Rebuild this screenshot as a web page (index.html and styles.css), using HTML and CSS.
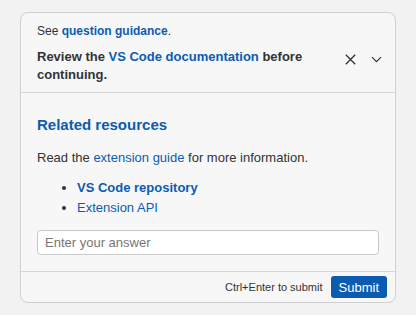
FILE: index.html
```html
<!DOCTYPE html>
<html lang="en">
<head>
    <meta charset="UTF-8">
    <meta name="viewport" content="width=device-width, initial-scale=1.0">
    <title>Question</title>
    <link rel="stylesheet" href="styles.css">
</head>
<body>
    <div class="card">
        <div class="card-header">
            <p class="hint">See <a href="#" class="strong-link">question guidance</a>.</p>
            <div class="notice">
                <p>Review the <a href="#">VS Code documentation</a> before continuing.</p>
                <div class="actions">
                    <button class="icon-btn" aria-label="Dismiss">
                        <svg width="11" height="11" viewBox="0 0 11 11"><path d="M0.8 0.8l9.4 9.4M10.2 0.8l-9.4 9.4" stroke="#333" stroke-width="1.3" fill="none"/></svg>
                    </button>
                    <button class="icon-btn" aria-label="Collapse">
                        <svg width="11" height="7" viewBox="0 0 11 7"><path d="M1 1.2l4.5 4.5 4.5-4.5" stroke="#333" stroke-width="1.2" fill="none"/></svg>
                    </button>
                </div>
            </div>
        </div>

        <div class="card-body">
            <h2>Related resources</h2>
            <p>Read the <a href="#">extension guide</a> for more information.</p>
            <ul>
                <li><a href="#" class="strong-link">VS Code repository</a></li>
                <li><a href="#">Extension API</a></li>
            </ul>
            <input type="text" placeholder="Enter your answer">
        </div>

        <div class="card-footer">
            <span class="shortcut">Ctrl+Enter to submit</span>
            <button class="submit">Submit</button>
        </div>
    </div>
</body>
</html>
```

FILE: styles.css
```css
body {
    font-family: "Liberation Sans", Arial, sans-serif;
    margin: 0;
    padding: 12px 20px;
    background-color: #f2f2f2;
    color: #333;
    font-size: 13px;
}

a {
    color: #0b5cb0;
    text-decoration: none;
}

.strong-link {
    font-weight: bold;
}

.card {
    width: 374px;
    background-color: #f7f7f7;
    border: 1px solid #cfcfcf;
    border-radius: 8px;
}

.card-header {
    padding: 9px 12px 8px 16px;
    border-bottom: 1px solid #d6d6d6;
}

.card-header p {
    margin: 0;
    line-height: 18px;
}

.hint {
    font-size: 12px;
}

.notice {
    display: flex;
    align-items: flex-start;
    margin-top: 8px;
    font-weight: bold;
}

.notice p {
    flex: 1;
    padding-right: 24px;
}

.actions {
    display: flex;
    gap: 12px;
    padding-top: 4px;
}

.icon-btn {
    width: 14px;
    height: 14px;
    padding: 0;
    border: none;
    background: none;
    display: flex;
    align-items: center;
    justify-content: center;
    cursor: pointer;
}

.card-body {
    padding: 22px 16px 16px 16px;
}

.card-body h2 {
    margin: 0 0 13px 0;
    font-size: 15px;
    line-height: 20px;
    color: #0b5cb0;
}

.card-body p {
    margin: 0 0 10px 0;
    line-height: 20px;
}

.card-body ul {
    margin: 0 0 12px 0;
    padding-left: 40px;
}

.card-body li {
    line-height: 20px;
}

.card-body input {
    display: block;
    width: 100%;
    box-sizing: border-box;
    height: 25px;
    padding: 3px 7px;
    border: 1px solid #c8c8c8;
    border-radius: 4px;
    background-color: #fff;
    font-family: inherit;
    font-size: 13px;
    color: #333;
}

.card-body input::placeholder {
    color: #767676;
}

.card-footer {
    display: flex;
    justify-content: flex-end;
    align-items: center;
    gap: 8px;
    padding: 4px 8px 4px 16px;
    border-top: 1px solid #d6d6d6;
}

.shortcut {
    font-size: 11px;
    color: #333;
}

.submit {
    height: 22px;
    padding: 0 8px;
    border: none;
    border-radius: 3px;
    background-color: #0b5cb0;
    color: #fff;
    font-family: inherit;
    font-size: 13px;
    cursor: pointer;
}
```
